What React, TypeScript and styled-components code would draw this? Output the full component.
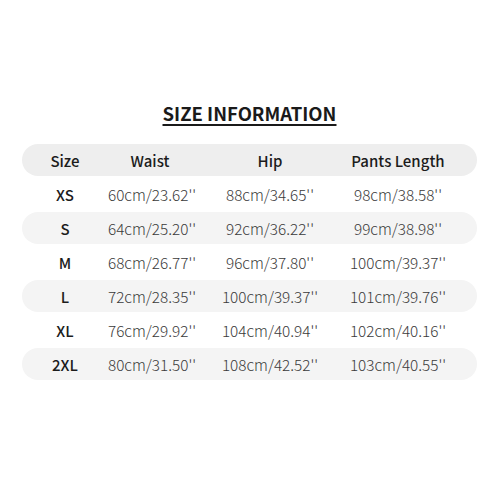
import React from 'react';
import styled, { createGlobalStyle } from 'styled-components';

const GlobalStyle = createGlobalStyle`
  html, body {
    margin: 0;
    padding: 0;
    background: #ffffff;
  }
  body {
    font-family: "Noto Sans CJK SC", "Noto Sans", sans-serif;
    color: #1f1f1f;
  }
`;

const Page = styled.div`
  width: 500px;
  height: 500px;
  box-sizing: border-box;
  padding: 100px 23px 0 22px;
  display: flex;
  flex-direction: column;
  align-items: stretch;
`;

const Title = styled.h1`
  margin: 0 0 18px;
  text-align: center;
  font-size: 18.5px;
  line-height: 26px;
  font-weight: 700;
  color: #1a1a1a;
  text-decoration: underline;
  text-decoration-thickness: 2px;
  text-underline-offset: 3px;
`;

const Table = styled.div`
  display: flex;
  flex-direction: column;
  gap: 2px;
`;

const Row = styled.div<{ $shade?: 'head' | 'band' | 'none' }>`
  display: grid;
  grid-template-columns: 86px 84px 156px 100px 1fr;
  align-items: center;
  height: 32px;
  border-radius: 16px;
  background: ${p =>
    p.$shade === 'head' ? '#eeeeee' : p.$shade === 'band' ? '#f4f4f4' : 'transparent'};
`;

const Cell = styled.div<{ $strong?: boolean }>`
  text-align: center;
  white-space: nowrap;
  font-size: ${p => (p.$strong ? '15px' : '15.3px')};
  font-weight: ${p => (p.$strong ? 500 : 300)};
  color: ${p => (p.$strong ? '#1c1c1c' : '#3a3a3a')};
`;

const headers = ['Size', 'Waist', 'Hip', 'Pants Length'];

const rows = [
  ['XS', "60cm/23.62''", "88cm/34.65''", "98cm/38.58''"],
  ['S', "64cm/25.20''", "92cm/36.22''", "99cm/38.98''"],
  ['M', "68cm/26.77''", "96cm/37.80''", "100cm/39.37''"],
  ['L', "72cm/28.35''", "100cm/39.37''", "101cm/39.76''"],
  ['XL', "76cm/29.92''", "104cm/40.94''", "102cm/40.16''"],
  ['2XL', "80cm/31.50''", "108cm/42.52''", "103cm/40.55''"],
];

export default function App() {
  return (
    <>
      <GlobalStyle />
      <Page>
        <Title>SIZE INFORMATION</Title>
        <Table>
          <Row $shade="head">
            {headers.map(h => (
              <Cell key={h} $strong>{h}</Cell>
            ))}
          </Row>
          {rows.map((r, i) => (
            <Row key={r[0]} $shade={i % 2 === 1 ? 'band' : 'none'}>
              {r.map((v, j) => (
                <Cell key={j} $strong={j === 0}>{v}</Cell>
              ))}
            </Row>
          ))}
        </Table>
      </Page>
    </>
  );
}
